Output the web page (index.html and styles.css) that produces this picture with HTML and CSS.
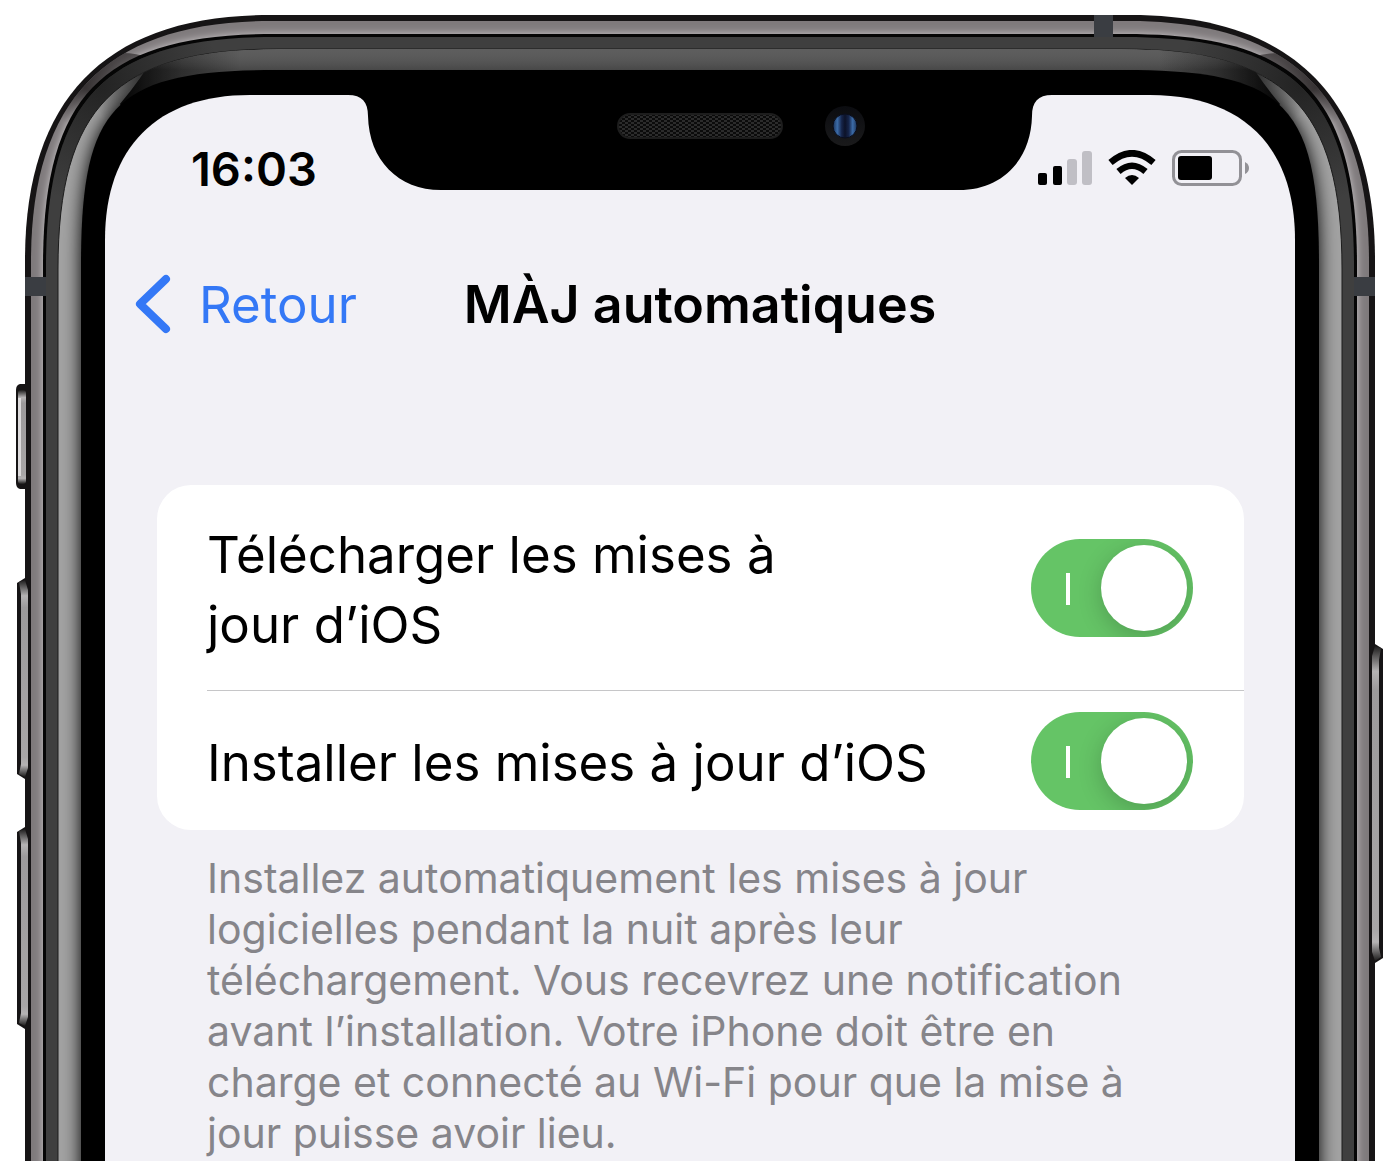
FILE: index.html
```html
<!DOCTYPE html>
<html lang="fr">
<head>
    <meta charset="UTF-8">
    <meta name="viewport" content="width=device-width, initial-scale=1.0">
    <title>MÀJ automatiques</title>
    <link rel="stylesheet" href="styles.css">
</head>
<body>
    <div class="phone">
        <!-- Phone body: one half is drawn, the other is its mirror -->
        <svg class="frame" width="100%" height="100%" aria-hidden="true">
            <defs>
                <linearGradient id="glass" gradientUnits="userSpaceOnUse" x1="125" y1="0" x2="240" y2="0">
                    <stop offset="0" stop-color="#080808"/>
                    <stop offset="0.5" stop-color="#363636"/>
                    <stop offset="1" stop-color="#535353"/>
                </linearGradient>
                <linearGradient id="glass-shade" gradientUnits="userSpaceOnUse" x1="0" y1="49" x2="0" y2="70">
                    <stop offset="0" stop-color="#fff" stop-opacity="0.06"/>
                    <stop offset="1" stop-color="#000" stop-opacity="0.14"/>
                </linearGradient>
                <linearGradient id="bend" gradientUnits="userSpaceOnUse" x1="112" y1="58" x2="68" y2="125">
                    <stop offset="0" stop-color="#231f20" stop-opacity="0.6"/>
                    <stop offset="0.5" stop-color="#231f20" stop-opacity="0.8"/>
                    <stop offset="1" stop-color="#231f20" stop-opacity="0"/>
                </linearGradient>
                <radialGradient id="corner-shade" gradientUnits="userSpaceOnUse" cx="100" cy="85" r="120">
                    <stop offset="0" stop-color="#1c1c1c" stop-opacity="0.8"/>
                    <stop offset="1" stop-color="#1c1c1c" stop-opacity="0"/>
                </radialGradient>
                <radialGradient id="tip-shade" gradientUnits="userSpaceOnUse" cx="145" cy="75" r="60">
                    <stop offset="0" stop-color="#111" stop-opacity="0.8"/>
                    <stop offset="1" stop-color="#111" stop-opacity="0"/>
                </radialGradient>
                <linearGradient id="key" x1="0" y1="0" x2="0" y2="1">
                    <stop offset="0" stop-color="#1c1b1b"/>
                    <stop offset="0.08" stop-color="#b5b3b4"/>
                    <stop offset="0.14" stop-color="#9c9a9b"/>
                    <stop offset="0.9" stop-color="#a8a6a7"/>
                    <stop offset="0.94" stop-color="#b5b3b4"/>
                    <stop offset="1" stop-color="#1c1b1b"/>
                </linearGradient>
                <linearGradient id="lens" x1="0" y1="0" x2="1" y2="0">
                    <stop offset="0" stop-color="#1b3358"/>
                    <stop offset="0.18" stop-color="#3c6ca8"/>
                    <stop offset="0.36" stop-color="#16254a"/>
                    <stop offset="0.5" stop-color="#0c1228"/>
                    <stop offset="0.66" stop-color="#16254a"/>
                    <stop offset="0.82" stop-color="#3c6ca8"/>
                    <stop offset="1" stop-color="#1b3358"/>
                </linearGradient>
                <linearGradient id="ring" x1="0" y1="0" x2="0" y2="1">
                    <stop offset="0" stop-color="#0b0c10"/>
                    <stop offset="1" stop-color="#1a1a1b"/>
                </linearGradient>
                <pattern id="mesh" width="6" height="4" patternUnits="userSpaceOnUse">
                    <rect width="6" height="4" fill="#0b0b0b"/>
                    <rect width="3" height="2" fill="#2b2b2b"/>
                    <rect x="3" y="2" width="3" height="2" fill="#2b2b2b"/>
                </pattern>
                <filter id="soft-band" x="-5%" y="-5%" width="110%" height="110%">
                    <feGaussianBlur stdDeviation="4"/>
                </filter>
                <filter id="soft-glass" x="-5%" y="-5%" width="110%" height="110%">
                    <feGaussianBlur stdDeviation="9"/>
                </filter>
                <path id="shape-band" d="M31 3000V261C31 98 108 21 271 21H3000V3000Z"/>
                <path id="shape-rim" d="M43 3000V266C43 94 103 34 275 34H3000V3000Z"/>
                <path id="shape-inner" d="M46 3000V267C46 97 106 37 276 37H3000V3000Z"/>
                <path id="shape-glass" d="M58 3000V269C58 107 116 49 278 49H3000V3000Z"/>
                <path id="shape-bezel" d="M81 3000V265C81 104 115 70 276 70H3000V3000Z"/>
                <clipPath id="clip-band"><use href="#shape-band"/></clipPath>
                <clipPath id="clip-glass"><use href="#shape-glass"/></clipPath>
            </defs>

            <svg width="50%" height="100%">
                <g id="half">
                    <path fill="#161415" d="M25 3000V260C25 97 107 15 270 15H3000V3000Z"/>
                    <use href="#shape-band" fill="#7f7a7c"/>
                    <g clip-path="url(#clip-band)">
                        <use href="#shape-rim" fill="#cbc7c9" filter="url(#soft-band)"/>
                        <path fill="url(#bend)" d="M20 170L60 60 100 30 112 54Q130 51 150 58L100 140Z"/>
                    </g>
                    <use href="#shape-rim" fill="#050505"/>
                    <use href="#shape-inner" fill="#3f3f3f"/>
                    <use href="#shape-inner" fill="url(#corner-shade)"/>
                    <use href="#shape-glass" fill="#a2a2a2" stroke="#1c1c1c"/>
                    <g clip-path="url(#clip-glass)">
                        <use href="#shape-bezel" fill="#000" filter="url(#soft-glass)"/>
                        <use href="#shape-glass" fill="url(#tip-shade)"/>
                        <path fill="url(#glass)" d="M158 50Q142 78 120 104L130 120H3000V40Z"/>
                        <path fill="url(#glass-shade)" d="M158 50Q142 78 120 104L130 120H3000V40Z"/>
                    </g>
                    <use href="#shape-bezel" fill="#000"/>
                    <path fill="#f2f1f6" d="M105 3000V240C105 147 157 95 250 95H3000V3000Z"/>
                    <path fill="#3a3d42" d="M25 277H46V296H25Z"/>
                </g>
                <!-- Mute switch and volume keys -->
                <path fill="#161415" d="M25 384H20Q16 385 16 390V483Q16 488 20 489H25Z"/>
                <rect x="18" y="390" width="8" height="94" rx="3" fill="url(#key)"/>
                <rect x="18" y="398" width="3" height="78" fill="#dddbdc"/>
                <path fill="#161415" d="M25 578L17 583V774L25 779 29 770V588Z"/>
                <path fill="url(#key)" d="M19 582L25 580 28 590V768L25 777 19 774 21 764V594Z"/>
                <path fill="#161415" d="M25 827L17 832V1024L25 1029 29 1020V837Z"/>
                <path fill="url(#key)" d="M19 831L25 829 28 839V1017L25 1026 19 1023 21 1013V843Z"/>
            </svg>

            <svg x="50%" width="50%" height="100%">
                <svg x="100%" overflow="visible">
                    <g transform="scale(-1 1)">
                        <use href="#half"/>
                        <path fill="#3a3d42" d="M287 15H306V37H287Z"/>
                        <!-- Side key -->
                        <path fill="#161415" d="M25 644L17 649V958L25 963 29 954V654Z"/>
                        <path fill="url(#key)" d="M19 648L25 646 28 656V952L25 961 19 957 21 948V660Z"/>
                    </g>
                </svg>
            </svg>

            <!-- Notch -->
            <svg x="50%" overflow="visible">
                <path d="M-352 94V95C-338 95-332 102-332 116C-331 160-302 190-259 190H259C302 190 331 160 332 116C332 102 338 95 352 95V94Z"/>
                <rect x="-82" y="114" width="164" height="24" rx="12" fill="url(#mesh)" stroke="#1d1d1d" stroke-width="2"/>
                <circle cx="145" cy="126" r="20" fill="url(#ring)"/>
                <circle cx="145" cy="126" r="12" fill="url(#lens)" stroke="#0a0e1c"/>
            </svg>
        </svg>

        <main class="screen">
            <div class="status-bar">
                <span class="time">16:03</span>
                <svg class="status-icons" width="212" height="36" viewBox="0 0 212 36" aria-hidden="true">
                    <rect x="0" y="23" width="9" height="12" rx="2"/>
                    <rect x="15" y="16" width="9" height="19" rx="2"/>
                    <g fill="#c0bfc5">
                        <rect x="29" y="9" width="10" height="26" rx="3"/>
                        <rect x="44" y="1" width="10" height="34" rx="3"/>
                    </g>
                    <path d="M94 35L87 28Q94 22 101 28Z"/>
                    <g fill="none" stroke="#000" stroke-width="6.500">
                        <path d="M80.500 21.500Q94 10 107.500 21.500"/>
                        <path d="M72.500 12.500Q94-6 115.500 12.500"/>
                    </g>
                    <rect x="135.500" y="1.500" width="67" height="33" rx="8" fill="none" stroke="#929196" stroke-width="3"/>
                    <rect x="140" y="6" width="34" height="24" rx="3"/>
                    <path fill="#929196" d="M207 12Q211 14 211 18T207 24Z"/>
                </svg>
            </div>

            <header class="nav-bar">
                <button type="button" class="back-button">
                    <svg width="36" height="60" viewBox="0 0 36 60" fill="none" aria-hidden="true">
                        <path d="M31 5L5 30 31 55" stroke="#3478f6" stroke-width="8" stroke-linecap="round" stroke-linejoin="round"/>
                    </svg>
                    Retour
                </button>
                <h1>MÀJ automatiques</h1>
            </header>

            <div class="settings">
                <div class="row">
                    <label for="download">Télécharger les mises à jour d’iOS</label>
                    <input type="checkbox" role="switch" class="toggle" id="download" checked>
                </div>
                <div class="row">
                    <label for="install">Installer les mises à jour d’iOS</label>
                    <input type="checkbox" role="switch" class="toggle" id="install" checked>
                </div>
            </div>
            <p class="note">Installez automatiquement les mises à jour logicielles pendant la nuit après leur téléchargement. Vous recevrez une notification avant l’installation. Votre iPhone doit être en charge et connecté au Wi-Fi pour que la mise à jour puisse avoir lieu.</p>
        </main>
    </div>
</body>
</html>
```

FILE: styles.css
```css
* {
    box-sizing: border-box;
}
body {
    margin: 0;
    background-color: #fff;
    color: #000;
    font-family: Inter, "Liberation Sans", sans-serif;
}
.phone {
    position: relative;
    min-height: 100vh;
    overflow: hidden;
}
.frame {
    position: absolute;
    top: 0;
    left: 0;
}
.screen {
    position: relative;
    padding: 138px 105px 0;
}
.status-bar {
    display: flex;
    align-items: center;
    justify-content: space-between;
    height: 60px;
    padding: 0 45px 0 86px;
}
.time {
    font-size: 47px;
    font-weight: 600;
}
.nav-bar {
    display: grid;
    grid-template-columns: 1fr auto 1fr;
    align-items: center;
    height: 100px;
    margin-top: 56px;
    padding: 0 30px;
}
.back-button {
    display: flex;
    align-items: center;
    gap: 28px;
    padding: 0;
    border: none;
    background: none;
    color: #3478f6;
    font-family: inherit;
    font-size: 51px;
    cursor: pointer;
}
h1 {
    margin: 0;
    font-size: 52px;
    font-weight: 600;
}
.settings {
    margin: 131px 51px 0 52px;
    background-color: #fff;
    border-radius: 34px;
}
.row {
    display: flex;
    align-items: center;
    justify-content: space-between;
    min-height: 139px;
    margin-left: 50px;
    padding-right: 51px;
}
.row:first-child {
    min-height: 206px;
    border-bottom: 1px solid #c6c6c8;
}
.row label {
    max-width: 760px;
    padding-top: 4px;
    font-size: 51px;
    line-height: 70px;
}
.row:first-child label {
    max-width: 660px;
}
.toggle {
    appearance: none;
    flex-shrink: 0;
    width: 162px;
    height: 98px;
    margin: 0;
    padding: 6px;
    border-radius: 49px;
    overflow: hidden;
    background: linear-gradient(#fff, #fff) 35px 34px / 4px 32px no-repeat #65c466;
    cursor: pointer;
}
.toggle::before {
    content: "";
    display: block;
    width: 86px;
    height: 86px;
    border-radius: 50%;
    background-color: #fff;
    box-shadow: 0 6px 24px rgba(0, 0, 0, 0.2);
}
.toggle:checked::before {
    margin-left: auto;
}
.note {
    margin: 0;
    padding: 23px 120px 0 102px;
    color: #86858a;
    font-size: 41px;
    line-height: 51px;
}
```
